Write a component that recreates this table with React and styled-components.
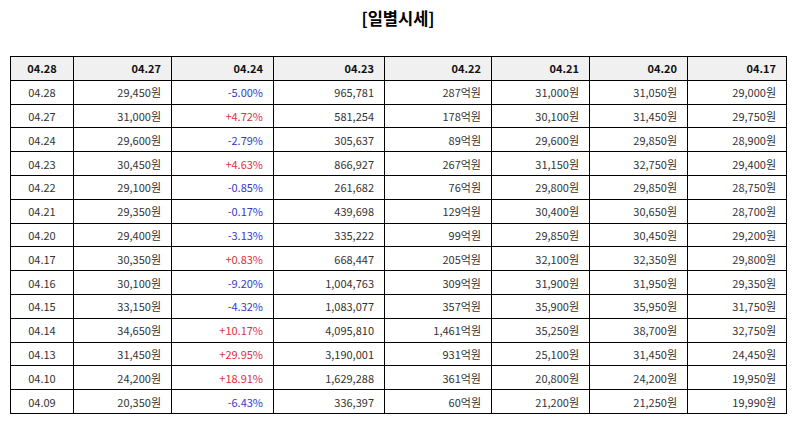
import React from "react";
import styled, { createGlobalStyle } from "styled-components";

const GlobalStyle = createGlobalStyle`
  body {
    margin: 0;
    background: #fff;
    font-family: "Noto Sans CJK KR", "Noto Sans", sans-serif;
    color: #222;
  }
`;

const Page = styled.div`
  width: 794px;
  padding: 5px 8px 0 10px;
  box-sizing: border-box;
`;

const Title = styled.h2`
  margin: 0;
  height: 26px;
  line-height: 26px;
  text-align: center;
  font-size: 16.5px;
  font-weight: 700;
  color: #000;
`;

const Table = styled.table`
  margin-top: 25px;
  width: 776px;
  border-collapse: collapse;
  table-layout: fixed;
  font-size: 11px;
`;

const Th = styled.th`
  height: 22.8px;
  padding: ${(p) => (p.$center ? "0" : "0 10px 0 0")};
  border: 1px solid #000;
  background: #f0f0f0;
  font-weight: 700;
  color: #111;
  text-align: ${(p) => (p.$center ? "center" : "right")};
`;

const Td = styled.td`
  height: 22.8px;
  padding: ${(p) => (p.$center ? "0" : "0 10px 0 0")};
  border: 1px solid #000;
  color: ${(p) => (p.$tone === "up" ? "#e0303a" : p.$tone === "down" ? "#3a36c8" : "#333")};
  text-align: ${(p) => (p.$center ? "center" : "right")};
  white-space: nowrap;
`;

const widths = [63, 98, 102, 111, 107, 98, 98, 99];
const heads = ["04.28", "04.27", "04.24", "04.23", "04.22", "04.21", "04.20", "04.17"];

const rows = [
  ["04.28", "29,450원", "-5.00%", "965,781", "287억원", "31,000원", "31,050원", "29,000원"],
  ["04.27", "31,000원", "+4.72%", "581,254", "178억원", "30,100원", "31,450원", "29,750원"],
  ["04.24", "29,600원", "-2.79%", "305,637", "89억원", "29,600원", "29,850원", "28,900원"],
  ["04.23", "30,450원", "+4.63%", "866,927", "267억원", "31,150원", "32,750원", "29,400원"],
  ["04.22", "29,100원", "-0.85%", "261,682", "76억원", "29,800원", "29,850원", "28,750원"],
  ["04.21", "29,350원", "-0.17%", "439,698", "129억원", "30,400원", "30,650원", "28,700원"],
  ["04.20", "29,400원", "-3.13%", "335,222", "99억원", "29,850원", "30,450원", "29,200원"],
  ["04.17", "30,350원", "+0.83%", "668,447", "205억원", "32,100원", "32,350원", "29,800원"],
  ["04.16", "30,100원", "-9.20%", "1,004,763", "309억원", "31,900원", "31,950원", "29,350원"],
  ["04.15", "33,150원", "-4.32%", "1,083,077", "357억원", "35,900원", "35,950원", "31,750원"],
  ["04.14", "34,650원", "+10.17%", "4,095,810", "1,461억원", "35,250원", "38,700원", "32,750원"],
  ["04.13", "31,450원", "+29.95%", "3,190,001", "931억원", "25,100원", "31,450원", "24,450원"],
  ["04.10", "24,200원", "+18.91%", "1,629,288", "361억원", "20,800원", "24,200원", "19,950원"],
  ["04.09", "20,350원", "-6.43%", "336,397", "60억원", "21,200원", "21,250원", "19,990원"],
];

const toneOf = (v) => (v.startsWith("+") ? "up" : v.startsWith("-") ? "down" : undefined);

export default function App() {
  return (
    <>
      <GlobalStyle />
      <Page>
        <Title>[일별시세]</Title>
        <Table>
          <colgroup>
            {widths.map((w, i) => (
              <col key={i} style={{ width: w }} />
            ))}
          </colgroup>
          <thead>
            <tr>
              {heads.map((h, i) => (
                <Th key={h} $center={i === 0}>
                  {h}
                </Th>
              ))}
            </tr>
          </thead>
          <tbody>
            {rows.map((r) => (
              <tr key={r[0]}>
                {r.map((v, i) => (
                  <Td key={i} $center={i === 0} $tone={i === 2 ? toneOf(v) : undefined}>
                    {v}
                  </Td>
                ))}
              </tr>
            ))}
          </tbody>
        </Table>
      </Page>
    </>
  );
}
